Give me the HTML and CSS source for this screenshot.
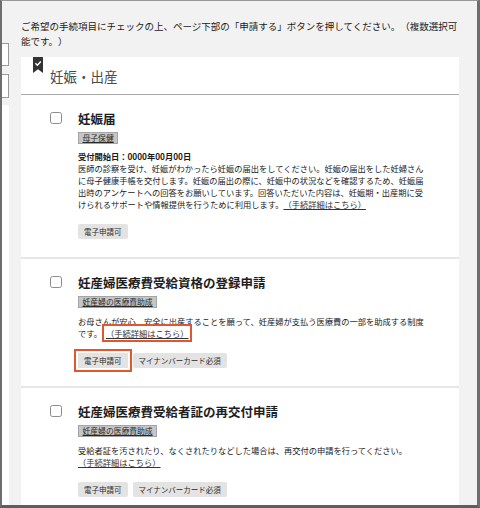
FILE: index.html
```html
<!DOCTYPE html>
<html lang="ja">
<head>
<meta charset="utf-8">
<link rel="stylesheet" href="styles.css">
</head>
<body>
<div class="frame">
  <div class="strip">
    <div class="strip-gap"></div>
    <div class="strip-box"></div>
    <div class="strip-box second"></div>
    <div class="strip-fill"></div>
  </div>
  <div class="main">
    <p class="intro">ご希望の手続項目にチェックの上、ページ下部の「申請する」ボタンを押してください。（複数選択可能です。）</p>
    <div class="card">
      <div class="card-head">
        <svg class="bookmark" width="10" height="16" viewBox="0 0 10 16"><path d="M0 0H10V16L5 12.2L0 16Z" fill="#333"/><path d="M2.4 6.2L4.4 8.2L7.8 4.4" fill="none" stroke="#fff" stroke-width="1.5"/></svg>
        <h2 class="card-title">妊娠・出産</h2>
      </div>

      <div class="item">
        <span class="checkbox"></span>
        <div class="content">
          <h3 class="title">妊娠届</h3>
          <span class="dept"><u>母子保健</u></span>
          <p class="date">受付開始日：0000年00月00日</p>
          <p class="desc">医師の診察を受け、妊娠がわかったら妊娠の届出をしてください。妊娠の届出をした妊婦さんに母子健康手帳を交付します。妊娠の届出の際に、妊娠中の状況などを確認するため、妊娠届出時のアンケートへの回答をお願いしています。回答いただいた内容は、妊娠期・出産期に受けられるサポートや情報提供を行うために利用します。<a class="link">（手続詳細はこちら）</a></p>
          <div class="tags"><span class="tag">電子申請可</span></div>
        </div>
      </div>

      <div class="item">
        <span class="checkbox"></span>
        <div class="content">
          <h3 class="title">妊産婦医療費受給資格の登録申請</h3>
          <span class="dept"><u>妊産婦の医療費助成</u></span>
          <p class="desc first">お母さんが安心、安全に出産することを願って、妊産婦が支払う医療費の一部を助成する制度です。<a class="link marked">（手続詳細はこちら）</a></p>
          <div class="tags"><span class="tag marked-tag">電子申請可</span><span class="tag">マイナンバーカード必須</span></div>
        </div>
      </div>

      <div class="item">
        <span class="checkbox"></span>
        <div class="content">
          <h3 class="title">妊産婦医療費受給者証の再交付申請</h3>
          <span class="dept"><u>妊産婦の医療費助成</u></span>
          <p class="desc first">受給者証を汚されたり、なくされたりなどした場合は、再交付の申請を行ってください。<a class="link">（手続詳細はこちら）</a></p>
          <div class="tags"><span class="tag">電子申請可</span><span class="tag">マイナンバーカード必須</span></div>
        </div>
      </div>
    </div>
  </div>
</div>
</body>
</html>
```

FILE: styles.css
```css
* { box-sizing: border-box; }
html, body { margin: 0; padding: 0; }
body {
  width: 480px;
  height: 508px;
  overflow: hidden;
  font-family: "Noto Sans CJK JP", "Noto Sans", sans-serif;
  color: #1a1a1a;
  background: #fff;
  text-spacing-trim: space-all;
}
.frame {
  width: 480px;
  height: 508px;
  display: flex;
  border-top: 1px solid #999;
  border-left: 2px solid #6e6e6e;
  border-right: 3px solid #6e6e6e;
  border-bottom: 3px solid #5e5e5e;
  background: #f2f2f2;
  overflow: hidden;
}
.strip {
  width: 7px;
  flex: none;
  display: flex;
  flex-direction: column;
}
.strip-gap { height: 42px; }
.strip-box {
  height: 23px;
  background: #fff;
  border: 1px solid #9a9a9a;
  border-left: none;
}
.strip-box.second { margin-top: 8px; height: 24px; }
.strip-fill { margin-top: 7px; flex: 1; background: #fff; }

.main {
  flex: 1;
  min-width: 0;
  padding: 18px 0 0 12px;
  display: flex;
  flex-direction: column;
}
.intro {
  margin: 0;
  width: 440px;
  font-size: 9.5px;
  line-height: 15px;
  color: #1a1a1a;
}
.card {
  margin-top: 8px;
  width: 438px;
  background: #fff;
  flex: 1;
}
.card-head {
  display: flex;
  align-items: flex-start;
  height: 38px;
  padding-left: 12px;
  border-bottom: 1px solid #a8a8a8;
}
.bookmark { flex: none; display: block; }
.card-title {
  margin: 10px 0 0 7px;
  font-size: 13.5px;
  line-height: 18px;
  font-weight: normal;
  color: #4a4a4a;
}
.item {
  display: flex;
  gap: 16px;
  padding: 16px 20px 18px 29px;
  border-bottom: 2px solid #e6e6e6;
}
.checkbox {
  flex: none;
  width: 12px;
  height: 12px;
  margin-top: 1px;
  border: 1px solid #8c8c8c;
  border-radius: 2.5px;
  background: #fff;
}
.content {
  display: flex;
  flex-direction: column;
  align-items: flex-start;
}
.title {
  margin: 0;
  font-size: 12.5px;
  line-height: 16px;
  font-weight: bold;
  color: #1e1e1e;
}
.dept {
  margin-top: 5px;
  height: 12px;
  padding: 0 3.5px;
  font-size: 7.8px;
  line-height: 10px;
  color: #2a2a2a;
  background: #c6c6c6;
  border: 1px solid #a4a4a4;
}
.date {
  margin: 6px 0 0;
  font-size: 8.25px;
  line-height: 12px;
  font-weight: bold;
  color: #1a1a1a;
}
.desc {
  margin: 0;
  width: 347px;
  font-size: 8.25px;
  line-height: 12px;
  color: #1a1a1a;
}
.desc.first { margin-top: 7px; }
.link {
  color: #333;
  text-decoration: underline;
  white-space: nowrap;
}
.link.marked {
  margin-left: 3px;
  padding: 0 1px;
  outline: 2px solid #e0562e;
  outline-offset: 1px;
}
.tags {
  display: flex;
  gap: 5px;
  margin-top: 14px;
}
.tag {
  height: 15px;
  padding: 0 6px;
  font-size: 7.5px;
  line-height: 15px;
  color: #2a2a2a;
  background: #e3e3e3;
  border-radius: 2px;
}
.tag.marked-tag {
  border-radius: 0;
  outline: 2.5px solid #e0562e;
  outline-offset: 2.5px;
}
```
